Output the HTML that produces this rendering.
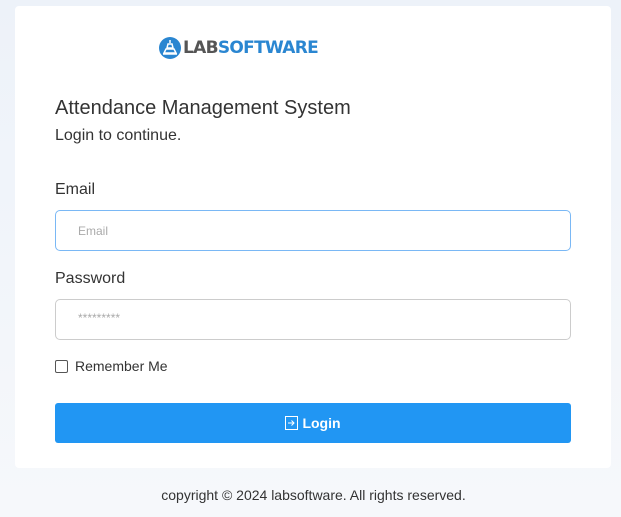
<!DOCTYPE html>
<html><head><style>
body{margin:0;width:621px;height:517px;background:linear-gradient(#edf2f9,#f6f8fb);font-family:"Liberation Sans",sans-serif;position:relative;overflow:hidden;color:#333}
.card{position:absolute;left:15px;top:6px;width:596px;height:462px;background:#fff;border-radius:4px}
.logo{position:absolute;left:159px;top:37px;display:flex;align-items:center}
.logo span{font-family:"DejaVu Sans","Liberation Sans",sans-serif;font-weight:bold;font-size:17px;letter-spacing:-0.7px}
h1{position:absolute;left:55px;top:97px;margin:0;font-weight:normal;font-size:20px;color:#333}
.sub{position:absolute;left:55px;top:127px;font-size:16px;color:#333}
.lbl{position:absolute;left:55px;font-size:16px;color:#333}
.in{position:absolute;left:55px;width:514px;height:39px;border:1px solid #ccc;border-radius:5px;font-size:12px;color:#aaa;box-sizing:content-box}
.in div{position:absolute;left:22px;top:13px}
.btn{position:absolute;left:55px;top:403px;width:516px;height:40px;background:#2196f3;border-radius:3px;color:#fff;font-weight:bold;font-size:14px;display:flex;align-items:center;justify-content:center}
.foot{position:absolute;left:3px;width:621px;top:487px;text-align:center;font-size:14px;color:#333}
</style></head><body>
<div class="card"></div>
<div class="logo">
<svg width="22" height="22" viewBox="0 0 22 22"><circle cx="11" cy="11" r="11" fill="#2a86d1"/><path d="M11 3v3M9 7h4l1 4h-6zM7 12h8l2 4H5zM4 17h14" stroke="#fff" stroke-width="1.5" fill="none"/></svg>
<span style="color:#555;margin-left:2px">LAB</span><span style="color:#2a86d1">SOFTWARE</span>
</div>
<h1>Attendance Management System</h1>
<div class="sub">Login to continue.</div>
<div class="lbl" style="top:181px">Email</div>
<div class="in" style="top:210px;border-color:#7ab8f5"><div>Email</div></div>
<div class="lbl" style="top:270px">Password</div>
<div class="in" style="top:299px"><div style="top:11px">*********</div></div>
<div style="position:absolute;left:55px;top:360px;width:11px;height:11px;border:1px solid #555;border-radius:2px"></div>
<div style="position:absolute;left:75px;top:358px;font-size:14px;color:#333">Remember Me</div>
<div class="btn"><svg width="13" height="14" viewBox="0 0 13 14" style="margin-right:4px"><rect x="0.5" y="0.5" width="12" height="13" fill="none" stroke="#fff"/><path d="M3 7h6M6.5 4.5L9 7 6.5 9.5" stroke="#fff" fill="none"/></svg>Login</div>
<div class="foot">copyright © 2024 labsoftware. All rights reserved.</div>
</body></html>
